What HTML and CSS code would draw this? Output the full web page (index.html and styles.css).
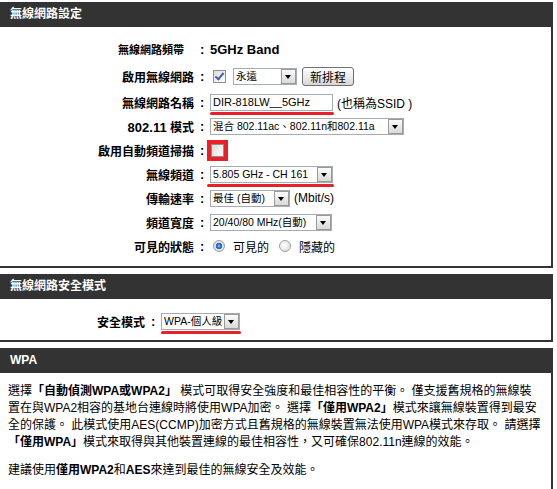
FILE: index.html
```html
<!DOCTYPE html>
<html lang="zh-Hant">
<head>
    <meta charset="UTF-8">
    <meta name="viewport" content="width=device-width, initial-scale=1.0">
    <title>無線網路設定</title>
    <link rel="stylesheet" href="styles.css">
</head>
<body>
    <div class="section">
        <div class="section-head">無線網路設定</div>
        <div class="section-body settings">
            <div class="row row-first">
                <span class="label label-band">無線網路頻帶</span>
                <span class="colon">:</span>
                <div class="value"><strong class="band">5GHz Band</strong></div>
            </div>
            <div class="row row-second">
                <span class="label">啟用無線網路</span>
                <span class="colon">:</span>
                <div class="value">
                    <input type="checkbox" class="check" checked>
                    <span class="select sel-schedule">
                        <select><option>永遠</option></select>
                        <span class="select-arrow"></span>
                    </span>
                    <button class="btn">新排程</button>
                </div>
            </div>
            <div class="row">
                <span class="label">無線網路名稱</span>
                <span class="colon">:</span>
                <div class="value">
                    <span class="marked">
                        <input type="text" class="text-input" value="DIR-818LW__5GHz">
                    </span>
                    <span class="note">(也稱為SSID )</span>
                </div>
            </div>
            <div class="row">
                <span class="label"><span class="latin">802.11</span> 模式</span>
                <span class="colon">:</span>
                <div class="value">
                    <span class="select sel-mode">
                        <select><option>混合 802.11ac、802.11n和802.11a</option></select>
                        <span class="select-arrow"></span>
                    </span>
                </div>
            </div>
            <div class="row">
                <span class="label">啟用自動頻道掃描</span>
                <span class="colon">:</span>
                <div class="value">
                    <input type="checkbox" class="check check-boxed">
                </div>
            </div>
            <div class="row">
                <span class="label">無線頻道</span>
                <span class="colon">:</span>
                <div class="value">
                    <span class="select sel-channel marked marked-wide">
                        <select><option>5.805 GHz - CH 161</option></select>
                        <span class="select-arrow"></span>
                    </span>
                </div>
            </div>
            <div class="row">
                <span class="label">傳輸速率</span>
                <span class="colon">:</span>
                <div class="value">
                    <span class="select sel-rate">
                        <select><option>最佳 (自動)</option></select>
                        <span class="select-arrow"></span>
                    </span>
                    <span class="note">(Mbit/s)</span>
                </div>
            </div>
            <div class="row">
                <span class="label">頻道寬度</span>
                <span class="colon">:</span>
                <div class="value">
                    <span class="select sel-width">
                        <select><option>20/40/80 MHz(自動)</option></select>
                        <span class="select-arrow"></span>
                    </span>
                </div>
            </div>
            <div class="row">
                <span class="label">可見的狀態</span>
                <span class="colon">:</span>
                <div class="value">
                    <label class="radio-label"><input type="radio" name="visible" class="radio" checked>可見的</label>
                    <label class="radio-label"><input type="radio" name="visible" class="radio">隱藏的</label>
                </div>
            </div>
        </div>
    </div>

    <div class="section">
        <div class="section-head">無線網路安全模式</div>
        <div class="section-body security">
            <div class="row row-security">
                <span class="label">安全模式</span>
                <span class="colon">:</span>
                <div class="value">
                    <span class="select sel-security marked">
                        <select><option>WPA-個人級</option></select>
                        <span class="select-arrow"></span>
                    </span>
                </div>
            </div>
        </div>
    </div>

    <div class="section">
        <div class="section-head">WPA</div>
        <div class="section-body info">
            <p>選擇<b>「自動偵測WPA或WPA2」</b> 模式可取得安全強度和最佳相容性的平衡。 僅支援舊規格的無線裝<br>置在與WPA2相容的基地台連線時將使用WPA加密。 選擇<b>「僅用WPA2」</b>模式來讓無線裝置得到最安<br>全的保護。 此模式使用AES(CCMP)加密方式且舊規格的無線裝置無法使用WPA模式來存取。 請選擇<br><b>「僅用WPA」</b>模式來取得與其他裝置連線的最佳相容性，又可確保802.11n連線的效能。</p>
            <p>建議使用<b>僅用WPA2</b>和<b>AES</b>來達到最佳的無線安全及效能。</p>
        </div>
    </div>
</body>
</html>
```

FILE: styles.css
```css
body {
    margin: 0;
    padding-top: 2px;
    background: #fff;
    color: #000;
    font-family: "Liberation Sans", "Noto Sans CJK TC", sans-serif;
    font-size: 12px;
}

.section {
    width: 553px;
}
.section + .section {
    margin-top: 6px;
}
.section-head {
    height: 25px;
    line-height: 25px;
    padding-left: 10px;
    background: #333;
    color: #fff;
    font-weight: bold;
    font-size: 12px;
}
.section-body {
    border-right: 2px solid #333;
    border-bottom: 2px solid #333;
}

/* form rows */
.settings {
    padding: 9px 0 8px;
}
.row {
    display: grid;
    grid-template-columns: 196px 14px 1fr;
    align-items: center;
    height: 24px;
}
.row-first {
    height: 26px;
}
.row-second {
    height: 28px;
}
.label {
    text-align: right;
    padding-right: 2px;
    font-weight: bold;
    font-size: 12px;
}
.label .latin {
    font-size: 13px;
}
.label-band {
    font-size: 11px;
    padding-right: 12px;
}
.colon {
    padding-left: 4px;
    font-weight: bold;
    font-size: 13px;
}
.value {
    display: flex;
    align-items: center;
}
.band {
    font-size: 13px;
}
.note {
    margin-left: 4px;
    font-size: 12px;
}

/* controls */
.select {
    position: relative;
    display: inline-block;
    height: 17px;
}
.select select {
    appearance: none;
    -webkit-appearance: none;
    display: block;
    width: 100%;
    height: 17px;
    margin: 0;
    padding: 0 14px 0 2px;
    border: 1px solid #a5acb2;
    border-radius: 0;
    background: #fff;
    color: #000;
    font-family: "Liberation Sans", "Noto Sans CJK TC", sans-serif;
    font-size: 10.5px;
}
.select-arrow {
    position: absolute;
    top: 1px;
    right: 1px;
    width: 15px;
    height: 15px;
    box-sizing: border-box;
    border: 1px solid #9a9a9a;
    background: linear-gradient(#fbfbfb, #d9d9d9);
    pointer-events: none;
}
.select-arrow::after {
    content: "";
    position: absolute;
    left: 3px;
    top: 5px;
    border-left: 3.5px solid transparent;
    border-right: 3.5px solid transparent;
    border-top: 4px solid #000;
}
.sel-schedule { width: 64px; margin-left: 7px; }
.sel-mode { width: 194px; }
.sel-channel { width: 123px; }
.sel-rate { width: 80px; }
.sel-width { width: 122px; }
.sel-security { width: 79px; }

.btn {
    margin-left: 5px;
    width: 52px;
    height: 19px;
    padding: 0;
    border: 1px solid #707070;
    border-radius: 3px;
    background: linear-gradient(#fefefe, #e8e8e8 60%, #d6d6d6);
    font-family: "Liberation Sans", "Noto Sans CJK TC", sans-serif;
    font-size: 12px;
    color: #000;
}

.text-input {
    display: block;
    width: 123px;
    height: 17px;
    box-sizing: border-box;
    margin: 0;
    padding: 0 2px;
    border: 1px solid #a5acb2;
    font-family: "Liberation Sans", sans-serif;
    font-size: 11px;
    color: #000;
}

.check {
    appearance: none;
    -webkit-appearance: none;
    position: relative;
    width: 13px;
    height: 13px;
    margin: 0 0 0 3px;
    border: 1px solid #8e8f8f;
    background: linear-gradient(135deg, #dcdcd6, #fdfdfd);
}
.check:checked::after {
    content: "";
    position: absolute;
    left: 3px;
    top: 0;
    width: 3px;
    height: 7px;
    border-right: 2px solid #4b5bb5;
    border-bottom: 2px solid #4b5bb5;
    transform: rotate(40deg);
}
.check-boxed {
    margin-left: 1px;
    outline: 4px solid #e8202a;
}

.radio-label {
    display: inline-flex;
    align-items: center;
    margin-right: 7px;
    font-size: 12px;
}
.radio {
    appearance: none;
    -webkit-appearance: none;
    width: 12px;
    height: 12px;
    margin: 0 8px 0 3px;
    border: 1px solid #a0a0a0;
    border-radius: 50%;
    background: radial-gradient(circle at 40% 40%, #fff, #d6d6d6);
}
.radio:checked {
    background: radial-gradient(circle, #9fd0ff 0, #1f67c8 2px, #2e6fc2 3px, #e8e8e8 3.6px, #c8c8c8 100%);
}

/* red annotation lines */
.marked {
    position: relative;
    display: inline-block;
}
.marked::after {
    content: "";
    position: absolute;
    left: 0;
    right: -1px;
    bottom: -4px;
    height: 3px;
    border-radius: 2px;
    background: #e8202a;
}
.marked-wide::after {
    left: -3px;
}

/* security section */
.security {
    padding: 10px 0 7px;
}
.row-security {
    grid-template-columns: 147px 14px 1fr;
}

/* info text */
.info {
    border-bottom: none;
    padding: 10px 8px 3px;
}
.info p {
    margin: 0 0 11px;
    line-height: 17px;
    font-size: 12px;
}
```
